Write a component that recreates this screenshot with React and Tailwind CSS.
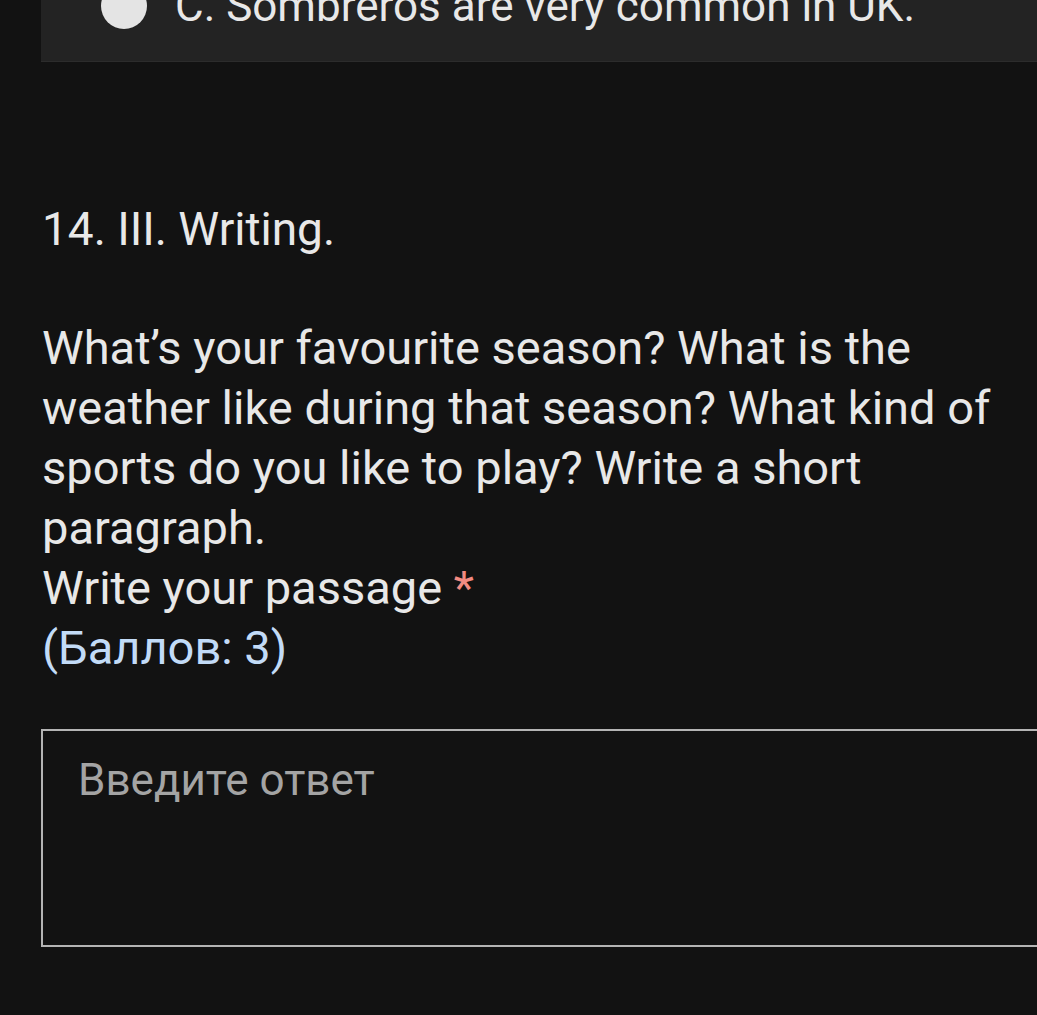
import React from 'react';

export default function App() {
  return (
    <div
      className="min-h-screen w-full overflow-hidden bg-[#121212] text-[47px] leading-[60px] text-[#e8e8e8]"
      style={{ fontFamily: 'Roboto, "Noto Sans", sans-serif' }}
    >
      {/* previous question card, scrolled off the top */}
      <div className="ml-[41px] h-[62px] overflow-hidden bg-[#232323] border-b border-[#2c2c2c]">
        <div className="mt-[-24px] flex items-center pl-[60px] text-[44px]">
          <div className="h-[46px] w-[46px] shrink-0 rounded-full bg-[#e4e4e4]" />
          <span className="ml-[28px] whitespace-nowrap">C. Sombreros are very common in UK.</span>
        </div>
      </div>

      <div className="pl-[42px] pr-[40px]">
        <h2 className="mt-[137px] text-[46px] font-normal leading-[60px]">14. III. Writing.</h2>

        <p className="mt-[59px]">
          What’s your favourite season? What is the weather like during that season? What kind of
          sports do you like to play? Write a short paragraph.
        </p>
        <div>
          Write your passage <span className="text-[#f28b82]">*</span>
        </div>
        <div className="text-[#c2dbf7]">(Баллов: 3)</div>
      </div>

      <div className="ml-[41px] mt-[51px] h-[218px] border-2 border-r-0 border-[#b4b4b4] pl-[35px] pt-[19px] text-[44px]">
        <span className="text-[#a4a4a4]">Введите ответ</span>
      </div>
    </div>
  );
}
